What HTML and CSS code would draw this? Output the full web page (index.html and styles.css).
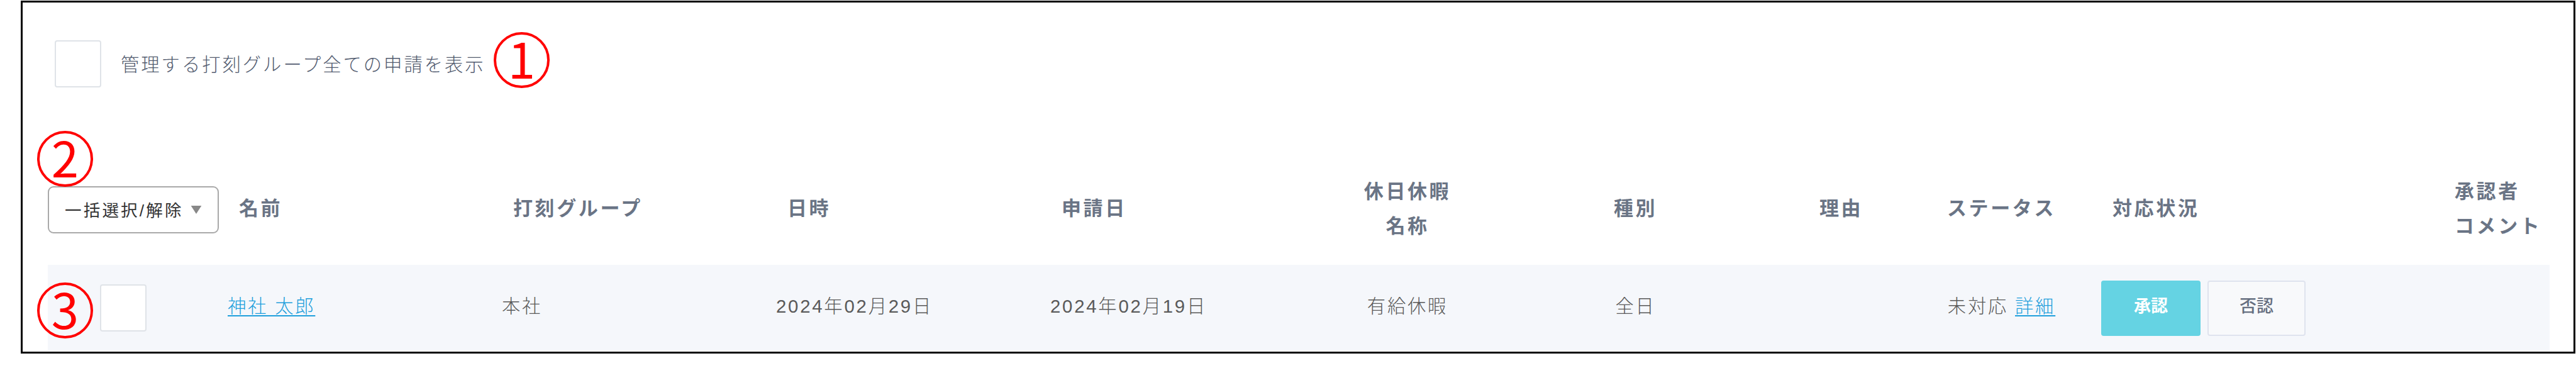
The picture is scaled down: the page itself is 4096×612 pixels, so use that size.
FILE: index.html
```html
<!DOCTYPE html>
<html lang="ja">
  <head>
    <meta charset="UTF-8" />
    <meta name="viewport" content="width=device-width, initial-scale=1.0" />
    <title>申請一覧</title>
    <link rel="stylesheet" href="styles.css">
  </head>
  <body>
    <div class="frame">
      <!-- 絞り込み -->
      <div class="filter">
        <span class="checkbox"></span>
        <span class="filter-label">管理する打刻グループ全ての申請を表示</span>
      </div>

      <!-- 申請一覧 -->
      <div class="table">
        <div class="row head">
          <div class="select-cell">
            <button class="bulk">
              <span>一括選択/解除</span>
              <svg class="arrow" viewBox="0 0 18 14"><path d="M0 0h18l-9 14z" /></svg>
            </button>
          </div>
          <div class="cell">名前</div>
          <div class="cell">打刻グループ</div>
          <div class="cell">日時</div>
          <div class="cell">申請日</div>
          <div class="cell center">休日休暇<br>名称</div>
          <div class="cell center">種別</div>
          <div class="cell center">理由</div>
          <div class="cell center">ステータス</div>
          <div class="cell">対応状況</div>
          <div class="cell">承認者<br>コメント</div>
        </div>
        <div class="row item">
          <div class="check-cell"><span class="checkbox"></span></div>
          <div class="cell"><a class="link">神社 太郎</a></div>
          <div class="cell">本社</div>
          <div class="cell">2024年02月29日</div>
          <div class="cell">2024年02月19日</div>
          <div class="cell center">有給休暇</div>
          <div class="cell center">全日</div>
          <div class="cell center"></div>
          <div class="cell center">未対応 <a class="link">詳細</a></div>
          <div class="actions">
            <button class="btn approve">承認</button>
            <button class="btn reject">否認</button>
          </div>
          <div class="cell"></div>
        </div>
      </div>
    </div>

    <!-- 説明用の番号 -->
    <span class="mark mark-1">1</span>
    <span class="mark mark-2">2</span>
    <span class="mark mark-3">3</span>
  </body>
</html>
```

FILE: styles.css
```css
* {
  box-sizing: border-box;
}

body {
  margin: 0;
  position: relative;
  width: 4096px;
  height: 612px;
  overflow: hidden;
  background: #fff;
  padding: 1px 1px 0 33px;
  font-family: "Liberation Sans", "Noto Sans CJK JP", sans-serif;
  font-size: 29.3px;
  font-weight: 300;
  letter-spacing: 2.8px;
  color: #5a5a5a;
}

.frame {
  height: 561px;
  border: 3px solid #000;
  padding: 0 38px 0 40px;
}

.filter {
  display: flex;
  align-items: center;
  height: 239px;
  padding: 60px 0 104px 11px;
}

.filter-label {
  margin-left: 31px;
  padding-bottom: 4px;
  letter-spacing: 3px;
  color: #535c70;
}

.checkbox {
  display: block;
  width: 74px;
  height: 75px;
  background: #fff;
  border: 2px solid #dfe3e8;
  border-radius: 4px;
}

.row {
  display: grid;
  grid-template-columns: 286px 436px 436px 436px 436px 264px 461px 193px 317px 547px 166px;
  align-items: center;
}

.head {
  height: 178px;
  font-size: 31px;
  font-weight: bold;
  letter-spacing: 3.6px;
  line-height: 54.4px;
  color: #6a7485;
}

.head .cell {
  padding: 1px 0 0 18px;
  white-space: nowrap;
}

.head .center {
  padding-left: 0;
}

.head .cell:last-child {
  padding-left: 15px;
}

.center {
  text-align: center;
}

.bulk {
  display: flex;
  align-items: center;
  width: 272px;
  height: 75px;
  margin-top: 2px;
  padding: 0 0 2px 25px;
  background: #fff;
  border: 2px solid #a9a9a9;
  border-radius: 9px;
  font-family: inherit;
  font-size: 26.5px;
  letter-spacing: 3.2px;
  color: #333;
}

.arrow {
  width: 18px;
  height: 13px;
  margin: 2px 0 0 11px;
  fill: #888;
}

.item {
  height: 137px;
  background: #f5f7fb;
}

.check-cell {
  padding: 0 0 1px 83px;
}

.item .cell {
  padding-bottom: 11px;
}

.link {
  color: #1f9fdc;
  text-decoration: underline;
  text-decoration-thickness: 2px;
  text-underline-offset: 4px;
}

.actions {
  display: flex;
  gap: 11px;
}

.btn {
  width: 158px;
  height: 88px;
  padding: 0 0 10px;
  border: none;
  border-radius: 4px;
  font-family: inherit;
  font-size: 27px;
  font-weight: bold;
}

.approve {
  background: #65d3e3;
  color: #fff;
}

.reject {
  width: 156px;
  background: #f8f9fb;
  border: 2px solid #dfe3ee;
  font-weight: 500;
  color: #666f80;
}

.mark {
  position: absolute;
  display: flex;
  justify-content: center;
  align-items: center;
  width: 89px;
  height: 89px;
  padding-bottom: 10px;
  border: 4.5px solid #f00;
  border-radius: 50%;
  font-family: "Noto Sans CJK JP", sans-serif;
  font-size: 78px;
  font-weight: 400;
  line-height: 1;
  letter-spacing: 0;
  color: #f00;
}

.mark-1 {
  left: 785px;
  top: 51px;
}

.mark-2 {
  left: 59px;
  top: 208px;
}

.mark-3 {
  left: 59px;
  top: 449px;
}
```
